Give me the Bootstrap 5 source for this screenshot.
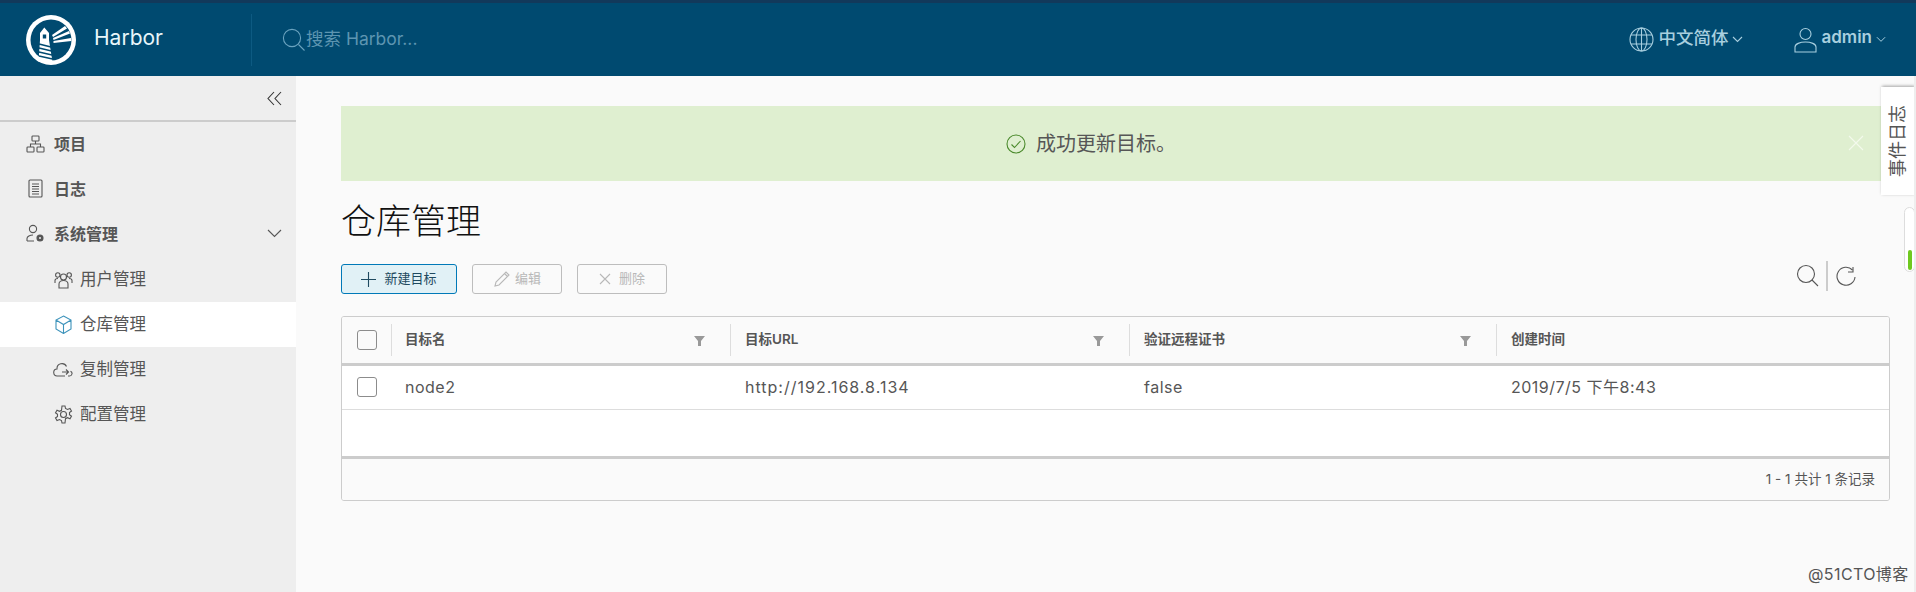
<!doctype html>
<html lang="zh">
<head>
<meta charset="utf-8">
<title>Harbor</title>
<link href="https://cdn.jsdelivr.net/npm/bootstrap@5.3.0/dist/css/bootstrap.min.css" rel="stylesheet">
<style>
html,body{height:592px;overflow:hidden}
body{font-family:"Inter","Noto Sans CJK SC",sans-serif;background:#fafafa;color:#565656}
svg{display:block;flex:none;fill:none;stroke:currentColor;stroke-width:1.1}
.topbar{height:76px;background:#004a70;border-top:3px solid #12395b;padding-left:26px}
.brand-name{font-size:21px;color:#e8f6fa;margin-left:18px;width:157px;padding-bottom:3px}
.search-zone{border-left:1px solid #0d5a82;height:52px;padding-left:30px;color:#6aa3bf;width:700px}
.search-ph{font-size:17.500px;color:#5d95b1;padding-bottom:1px}
.top-lang{color:#a8cfdf;font-size:17.500px;font-weight:500;margin-right:51px}
.top-user{color:#a8cfdf;font-size:17px;font-weight:600;margin-right:30px}
.top-lang span,.top-user span{padding-bottom:3px}
.main-wrap{height:516px}
.sidenav{width:296px;background:#eee;flex:none}
.collapse-row{height:46px;border-bottom:2px solid #ccc;padding-right:14px;color:#333}
.nav-one{height:45px;padding-left:26px;padding-bottom:2px;font-size:16px;font-weight:700;color:#565656}
.nav-one svg{margin-right:9px}
.nav-two{height:45px;padding-left:54px;font-size:16.500px;color:#565656}
.nav-two svg{margin-right:7px}
.nav-two.is-on{background:#fff}
.work{padding:30px 26px 0 45px;position:relative}
.note{height:75px;background:#dfefd0;color:#565656;font-size:20px;position:relative;width:1540px;padding-left:665px}
.note svg.ok{color:#4b8a2c;margin-right:10px}
.note-x{position:absolute;left:1505px;top:27px;color:#f3f9ec}
.page-ttl{font-size:35px;font-weight:300;color:#111;line-height:46px;margin:17px 0 20px}
.bar{height:30px;position:relative}
.tbtn{height:30px;border:1px solid #bdbdbd;border-radius:3px;background:transparent;color:#b8b8b8;font-size:13px;display:flex;align-items:center;justify-content:center;width:90px;margin-right:15px;padding:0}
.tbtn.go{width:116px;background:#e1f1f6;border-color:#0079b8;color:#1f4a60}
.tools{position:absolute;right:34px;top:-3px;color:#565656}
.tools i{display:block;width:2px;height:30px;background:#ccc;margin:0 8px 0 7px}
.grid-box{margin-top:22px;width:1549px;height:185px;border:1px solid #ccc;border-radius:3px;background:#fff;overflow:hidden}
.grid-hd{background:#fafafa;border-bottom:3px solid #ccc;height:49px;font-size:13.500px;font-weight:600;color:#565656}
.cell-chk{width:49px;flex:none;padding-left:15px}
.fake-box{width:20px;height:20px;border:1px solid #8c8c8c;border-radius:3px;background:#fff}
.grid-hd .fake-box{background:transparent}
.grid-hd .cell-chk,.grid-row .cell-chk{padding-bottom:1px}
.c1{width:339px;flex:none}.c2{width:399px;flex:none}.c3{width:367px;flex:none}.c4{flex:1}
.hcell{height:32px;border-left:1px solid #ddd;padding:0 15px 2px 14px;position:relative}
.hcell.c1{padding-left:13px}
.fnl{position:absolute;right:26px;top:12px;width:10px;height:10px;color:#999}
.fnl svg{fill:currentColor;stroke:none}
.grid-row{height:44px;border-bottom:1px solid #ddd;font-size:16px;color:#565656}
.drow{padding:0 15px 2px 15px;letter-spacing:.5px}
.drow.c1{padding-left:14px}
.drow.c2{letter-spacing:1px}
.grid-gap{border-bottom:3px solid #ccc;height:49px}
.grid-ft{height:41px;background:#fafafa;font-size:13.500px;padding-right:14px;color:#565656}
.side-tab{position:absolute;left:1585px;top:11px;width:33px;height:108px;background:#fff;box-shadow:-1px 1px 3px rgba(0,0,0,.35);color:#555;font-size:18px;line-height:33px;writing-mode:vertical-rl;text-orientation:sideways;transform:rotate(180deg);text-align:center}
.side-pill{position:absolute;left:1608px;top:131px;width:11px;height:65px;background:#fff;border:1px solid #ddd;border-radius:6px}
.side-pill b{position:absolute;left:3px;top:42px;width:4px;height:20px;background:#6fc91f;border-radius:2px}
.mark-wm{position:absolute;left:1512px;top:486px;font-size:16px;letter-spacing:.4px;color:#555;white-space:nowrap}
.edge{position:absolute;right:0;top:0;bottom:0;width:2px;background:#eee}
</style>
</head>
<body>
<header class="topbar d-flex align-items-center">
  <svg width="50" height="50" viewBox="0 0 50 50" style="stroke:none">
    <circle cx="25" cy="25" r="25" fill="#fff"/>
    <circle cx="25" cy="25" r="20.500" fill="#004a70"/>
    <path fill="#fff" d="M18.300 12.500 L23 18 V25 L26.500 47 H12.500 L14 25 V18 Z"/>
    <rect x="16.800" y="19.500" width="3.400" height="4" fill="#004a70"/>
    <path stroke="#004a70" stroke-width="1.300" d="M13 29 L25 32 M13 33 L25.500 36 M13 37 L26 40 M13 41 L26.500 44"/>
    <path fill="#fff" d="M26 20 L39 11 L41 13.500 L27 22Z M27 23 L43 16 L44 18.500 L27.500 25Z M27.500 26 L45 23 L45.400 26 L27.500 28Z"/>
  </svg>
  <div class="brand-name">Harbor</div>
  <div class="search-zone d-flex align-items-center">
    <svg width="24" height="24" viewBox="0 0 24 24" stroke-width="1.300"><circle cx="10" cy="10" r="8.600"/><path d="M16.500 16.500 L22.500 22.500"/></svg>
    <span class="search-ph">搜索 Harbor...</span>
  </div>
  <div class="ms-auto d-flex align-items-center top-lang">
    <svg width="25" height="25" viewBox="0 0 25 25"><circle cx="12.500" cy="12.500" r="11.500"/><ellipse cx="12.500" cy="12.500" rx="5.500" ry="11.500"/><path d="M12.500 1v23M2 8h21M2 17h21"/></svg>
    <span class="ms-1">中文简体</span>
    <svg class="ms-1" width="11" height="7" viewBox="0 0 11 7"><path d="M1 1l4.500 4.500L10 1"/></svg>
  </div>
  <div class="d-flex align-items-center top-user">
    <svg width="23" height="26" viewBox="0 0 23 26" stroke-width="1.300"><circle cx="11.500" cy="7" r="5.500"/><path d="M1 25v-5c0-3 5-5 10.500-5s10.500 2 10.500 5v5z"/></svg>
    <span class="ms-1">admin</span>
    <svg class="ms-1" width="10" height="7" viewBox="0 0 11 7"><path d="M1 1l4.500 4.500L10 1"/></svg>
  </div>
</header>
<div class="main-wrap d-flex">
  <nav class="sidenav">
    <div class="collapse-row d-flex align-items-center justify-content-end">
      <svg width="15" height="15" viewBox="0 0 15 15"><path d="M7 1L1 7.500l6 6.500M14 1L8 7.500l6 6.500"/></svg>
    </div>
    <div class="nav-one d-flex align-items-center">
      <svg width="19" height="18" viewBox="0 0 19 18"><rect x="6" y="1" width="7" height="5" rx=".8"/><rect x="1" y="12" width="7" height="5" rx=".8"/><rect x="11" y="12" width="7" height="5" rx=".8"/><path d="M9.500 6v3M4.500 12V9h10v3"/></svg>
      项目
    </div>
    <div class="nav-one d-flex align-items-center">
      <svg width="19" height="19" viewBox="0 0 19 19"><rect x="3" y="1" width="13" height="17" rx="1"/><path d="M6 5h7M6 7.500h7M6 10h7M6 12.500h7M6 15h7"/></svg>
      日志
    </div>
    <div class="nav-one d-flex align-items-center">
      <svg width="19" height="19" viewBox="0 0 19 19"><circle cx="7" cy="5" r="3.600"/><path d="M1 17v-2.500c0-2 3-3.500 6-3.500M1 17h7"/><circle cx="14" cy="14" r="3" fill="#565656" stroke="#565656"/><circle cx="14" cy="14" r="1" fill="#eee" stroke="none"/></svg>
      <span>系统管理</span>
      <svg class="ms-auto" style="margin-right:14px" width="15" height="9" viewBox="0 0 15 9"><path d="M1 1l6.500 6.500L14 1"/></svg>
    </div>
    <div class="nav-two d-flex align-items-center">
      <svg width="19" height="18" viewBox="0 0 19 18"><circle cx="9.500" cy="6" r="3"/><circle cx="3.800" cy="4" r="2.200"/><circle cx="15.200" cy="4" r="2.200"/><path d="M5 17v-4c0-2 2-3.500 4.500-3.500S14 11 14 13v4zM1 12V9.500C1 8 2.500 7.500 4 7.500M18 12V9.500C18 8 16.500 7.500 15 7.500"/></svg>
      用户管理
    </div>
    <div class="nav-two is-on d-flex align-items-center">
      <svg style="color:#3d93bb" width="19" height="19" viewBox="0 0 19 19"><path d="M9.500 1L17 5v9l-7.500 4.500L2 14V5zM2 5l7.500 4.500L17 5M9.500 9.500v9"/></svg>
      仓库管理
    </div>
    <div class="nav-two d-flex align-items-center" style="padding-left:53px">
      <svg width="20" height="17" viewBox="0 0 20 17"><path d="M12 15H4.500A3.500 3.500 0 0 1 4 8a5 5 0 0 1 9.500-2.500M15 15h1.500a2.500 2.500 0 0 0 1-4.800M9 11h6M13 8.500L15.500 11 13 13.500"/></svg>
      复制管理
    </div>
    <div class="nav-two d-flex align-items-center">
      <svg width="19" height="19" viewBox="0 0 19 19"><circle cx="9.500" cy="9.500" r="3"/><path d="M8 1h3l.5 2.500 2 1 2.500-1 1.500 2.500-2 1.500v2.200l2 1.500-1.500 2.500-2.500-1-2 1L11 18H8l-.5-2.500-2-1-2.500 1L1.500 13l2-1.500V9.300l-2-1.500L3 5.300l2.500 1 2-1z"/></svg>
      配置管理
    </div>
  </nav>
  <main class="work flex-grow-1">
    <div class="note d-flex align-items-center">
      <svg class="ok" width="20" height="20" viewBox="0 0 20 20" stroke-width="1.800"><circle cx="10" cy="10" r="9"/><path d="M5.500 10.500l3 3 6-6.500"/></svg>
      成功更新目标。
      <svg class="note-x" width="20" height="20" viewBox="0 0 20 20" stroke-width="1.500"><path d="M3 3l14 14M17 3L3 17"/></svg>
    </div>
    <h1 class="page-ttl">仓库管理</h1>
    <div class="bar d-flex">
      <button class="tbtn go" type="button"><svg class="me-2" width="15" height="15" viewBox="0 0 15 15" stroke-width="1.400"><path d="M7.500 0v15M0 7.500h15"/></svg>新建目标</button>
      <button class="tbtn" type="button"><svg class="me-1" width="18" height="18" viewBox="0 0 18 18"><path d="M2 16l1-4L13 2l3 3L6 15zM11.500 3.500l3 3"/></svg>编辑</button>
      <button class="tbtn" type="button"><svg class="me-2" width="12" height="12" viewBox="0 0 12 12"><path d="M1 1l10 10M11 1L1 11"/></svg>删除</button>
      <div class="tools d-flex align-items-center">
        <svg width="23" height="24" viewBox="0 0 23 24" stroke-width="1.300"><circle cx="10" cy="10" r="8.500"/><path d="M16 16l6 6"/></svg>
        <i></i>
        <svg width="20" height="20" viewBox="0 0 20 20" stroke-width="1.200"><path d="M16.500 4A9 9 0 1 0 19 11"/><path d="M17 1v5h-5"/></svg>
      </div>
    </div>
    <div class="grid-box">
      <div class="grid-hd d-flex align-items-center">
        <div class="cell-chk"><div class="fake-box"></div></div>
        <div class="hcell c1 d-flex align-items-center">目标名<span class="fnl"><svg width="11" height="10" viewBox="0 0 11 10"><path d="M0 0h11L7 5v5H4V5z"/></svg></span></div>
        <div class="hcell c2 d-flex align-items-center">目标URL<span class="fnl"><svg width="11" height="10" viewBox="0 0 11 10"><path d="M0 0h11L7 5v5H4V5z"/></svg></span></div>
        <div class="hcell c3 d-flex align-items-center">验证远程证书<span class="fnl"><svg width="11" height="10" viewBox="0 0 11 10"><path d="M0 0h11L7 5v5H4V5z"/></svg></span></div>
        <div class="hcell c4 d-flex align-items-center">创建时间</div>
      </div>
      <div class="grid-row d-flex align-items-center">
        <div class="cell-chk"><div class="fake-box"></div></div>
        <div class="drow c1">node2</div>
        <div class="drow c2">http://192.168.8.134</div>
        <div class="drow c3">false</div>
        <div class="drow c4">2019/7/5 下午8:43</div>
      </div>
      <div class="grid-gap"></div>
      <div class="grid-ft d-flex align-items-center justify-content-end">1 - 1 共计 1 条记录</div>
    </div>
    <div class="side-tab">事件日志</div>
    <div class="side-pill"><b></b></div>
    <div class="mark-wm">@51CTO博客</div>
    <div class="edge"></div>
  </main>
</div>
<script src="https://cdn.jsdelivr.net/npm/bootstrap@5.3.0/dist/js/bootstrap.bundle.min.js"></script>
</body>
</html>
